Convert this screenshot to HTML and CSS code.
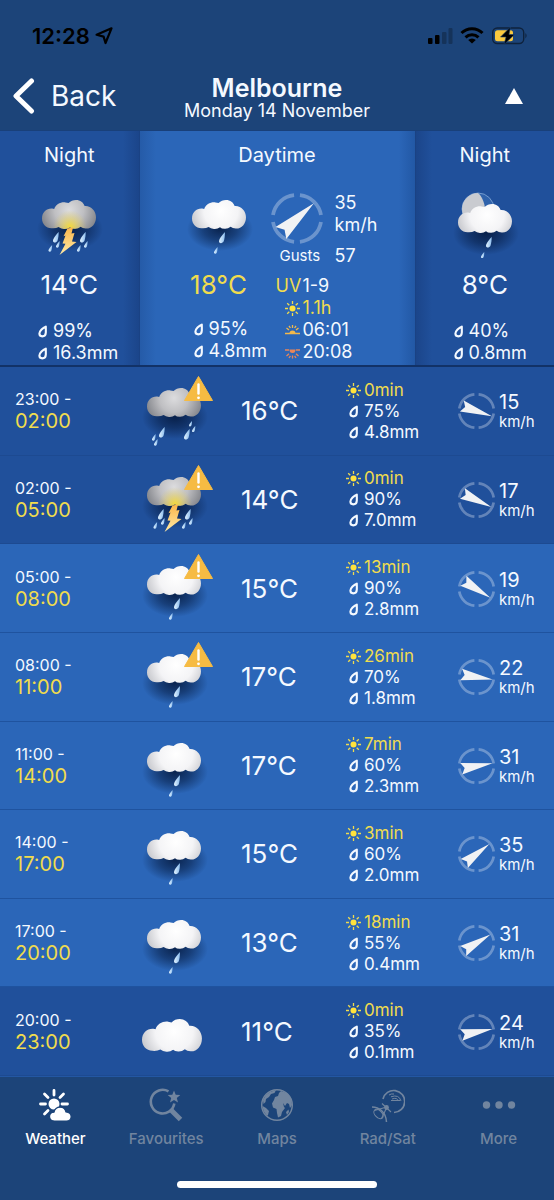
FILE: index.html
```html
<!DOCTYPE html>
<html lang="en">
<head>
<meta charset="utf-8">
<meta name="viewport" content="width=device-width, initial-scale=1">
<title>Melbourne – Monday 14 November</title>
<link rel="stylesheet" href="styles.css">
</head>
<body>
<svg class="defs" aria-hidden="true">
  <defs>
    <radialGradient id="g-white" gradientUnits="userSpaceOnUse" cx="29" cy="11" r="31">
      <stop offset="0" stop-color="#fff"/><stop offset=".55" stop-color="#f4f4f6"/><stop offset="1" stop-color="#c6c7cc"/>
    </radialGradient>
    <radialGradient id="g-grey" gradientUnits="userSpaceOnUse" cx="27" cy="10" r="29">
      <stop offset="0" stop-color="#dcdcde"/><stop offset=".5" stop-color="#bfbfc2"/><stop offset="1" stop-color="#84868c"/>
    </radialGradient>
    <radialGradient id="g-glow" gradientUnits="userSpaceOnUse" cx="28" cy="27" r="17">
      <stop offset="0" stop-color="#ffe022" stop-opacity=".85"/><stop offset="1" stop-color="#e8d060" stop-opacity="0"/>
    </radialGradient>
    <radialGradient id="g-shadow">
      <stop offset="0" stop-color="#04183c" stop-opacity=".85"/><stop offset=".5" stop-color="#04183c" stop-opacity=".5"/><stop offset="1" stop-color="#04183c" stop-opacity="0"/>
    </radialGradient>
    <linearGradient id="g-drop" x1="0" y1="0" x2="1" y2="0">
      <stop offset="0" stop-color="#e2f3ff"/><stop offset="1" stop-color="#8cbdee"/>
    </linearGradient>
    <linearGradient id="g-bolt" x1="0" y1="0" x2="0" y2="1">
      <stop offset="0" stop-color="#f9b54a"/><stop offset="1" stop-color="#ffeaa6"/>
    </linearGradient>
    <path id="cloud-shape" d="M9.5 28.2C3.6 28 0 23.6 0 18.4C0 12.6 4.2 8.6 9.5 8.6Q11 8.4 12.2 9C13.6 4.6 18.6 1.8 23.5 2.4L26.6 3C28.6 1 31.2 0 34 0C38.2 0 41.6 2.6 42.6 6C49 5.4 54 11 54 17.2C54 23.8 49.6 28.6 44.4 28.6Q40.8 28.8 38.6 26.8Q36 29 32.6 28.8Q29.6 28.8 28 27.2Q25.4 29.2 22 28.9Q18.6 28.8 16.6 27Q13.6 28.6 9.5 28.2Z"/>
    <path id="raindrop" fill="url(#g-drop)" d="M6 0C4 2 0 7 0 9.2C0 11.8 3.6 11.8 4.8 9C5.7 6.5 5.9 3 6 0Z"/>
    <ellipse id="shade" cx="28" cy="29" rx="33" ry="22" fill="url(#g-shadow)"/>
    <g id="alert">
      <path fill="#f6bb43" d="M51.5 2.5L65.500 26.500H37.5Z" stroke="#f6bb43" stroke-linejoin="round"/>
      <path d="M51.5 10.5V19.5" stroke="#fff" stroke-width="2.4" stroke-linecap="round"/><circle cx="51.5" cy="23.8" r="1.4" fill="#fff"/>
    </g>
    <g id="light-rain">
      <use href="#shade"/><use href="#cloud-shape" fill="url(#g-white)"/>
      <use href="#raindrop" transform="translate(27 32)"/><use href="#raindrop" transform="translate(22 47) scale(.6)"/>
    </g>
    <g id="heavy-rain">
      <use href="#shade"/><use href="#cloud-shape" fill="url(#g-grey)"/>
      <use href="#raindrop" transform="translate(12 39) scale(.95)"/><use href="#raindrop" transform="translate(5 46) scale(.6)"/><use href="#raindrop" transform="translate(7 51) scale(.6)"/>
      <use href="#raindrop" transform="translate(37 41) scale(.95)"/><use href="#raindrop" transform="translate(42 33) scale(.5)"/><use href="#raindrop" transform="translate(45 38) scale(.55)"/>
    </g>
    <g id="storm">
      <use href="#shade"/><use href="#cloud-shape" fill="url(#g-grey)"/><use href="#cloud-shape" fill="url(#g-glow)"/>
      <use href="#raindrop" transform="translate(11 32) scale(.95)"/><use href="#raindrop" transform="translate(6.500 45) scale(.6)"/><use href="#raindrop" transform="translate(14 41) scale(.6)"/>
      <use href="#raindrop" transform="translate(38 32) scale(.95)"/><use href="#raindrop" transform="translate(35 45) scale(.6)"/><use href="#raindrop" transform="translate(42 41) scale(.6)"/>
      <path fill="url(#g-bolt)" d="M25.500 28.500L31 27.500L29.500 33.500L32.500 33L30 41.500L34.500 42L17.500 55L23.500 43.800L20.500 43.600L23.500 35.500L21.500 36.200Z"/>
    </g>
    <g id="moon-rain" transform="translate(0 4)">
      <use href="#shade"/>
      <circle cx="20" cy="5" r="16" fill="#2f62ab" stroke="#86abd8" stroke-width=".8"/>
      <path fill="#c9cbd0" d="M20 -11A16 16 0 0 0 20 21L28 17C28 4 26 -6 20 -11Z"/>
      <use href="#cloud-shape" fill="url(#g-white)"/>
      <use href="#raindrop" transform="translate(28 33) scale(.95)"/><use href="#raindrop" transform="translate(23 48) scale(.55)"/>
    </g>
    <g id="compass">
      <path fill="none" stroke="#fff" stroke-opacity=".3" stroke-width="2.7" d="M20.600 2.300A17 17 0 0 1 35.700 16.500M35.700 21.500A17 17 0 0 1 20.600 35.700M16.400 35.700A17 17 0 0 1 1.300 21.500M1.300 16.500A17 17 0 0 1 16.400 2.300"/>
    </g>
    <path id="needle" fill="#f1f2f4" d="M34.800 19L3 24.800L6.500 19L3 13.200Z"/>
  </defs>
  <symbol id="sun" viewBox="0 0 15 15">
    <circle cx="7.500" cy="7.500" r="3" fill="#ffe23c"/>
    <path stroke="#f0dc4e" stroke-width="1.300" d="M7.500 0V3M7.500 12V15M0 7.500H3M12 7.500H15M2.200 2.200L4.300 4.300M10.700 10.700L12.800 12.800M12.800 2.200L10.700 4.300M4.300 10.700L2.200 12.800"/>
  </symbol>
  <symbol id="drop" viewBox="0 0 15 15">
    <path fill="none" stroke="#f4f9ff" stroke-width="2.100" stroke-linejoin="round" d="M10.800 2.600C8 3.800 4.400 7 4.400 9.600C4.400 11.300 5.600 12.400 7.300 12.400C9.400 12.400 10.700 11.300 10.800 8.800C10.900 6.600 10.800 4.800 10.800 2.600Z"/>
  </symbol>
  <symbol id="sunrise" viewBox="0 0 15 15">
    <path stroke="#f2b84b" stroke-width="1.300" d="M0 10.500H15M7.500 2V5M1.500 5L4 7M13.500 5L11 7M4 2.800L5.400 5M11 2.800L9.600 5"/><path fill="#f2b84b" d="M4.500 10.500A3 3 0 0 1 10.500 10.500Z"/>
  </symbol>
  <symbol id="sunset" viewBox="0 0 15 15">
    <path stroke="#e8865a" stroke-width="1.300" d="M0 5H4M11 5H15M7.500 10.500V13.500M1.500 11L4 8.800M13.500 11L11 8.800M4 13L5.400 10.800M11 13L9.600 10.800"/><path fill="#e8865a" d="M4.500 4.500H10.500A3 3.500 0 0 1 4.500 4.500Z"/>
  </symbol>
</svg>

<div class="app">
  <header class="top">
    <div class="status">
      <span class="clock">12:28</span>
      <svg class="locate" viewBox="0 0 18 18" aria-hidden="true"><path d="M16.500 1.300L10.500 16L8.600 9.600L1.600 7.800Z" fill="none" stroke="#000" stroke-width="2.200" stroke-linejoin="round"/></svg>
      <svg class="signals" viewBox="0 0 100 18" aria-hidden="true">
        <rect x="0" y="11" width="4.500" height="6" rx="1"/><rect x="7" y="8" width="4.500" height="9" rx="1"/>
        <rect x="14" y="5" width="4.500" height="12" rx="1" opacity=".25"/><rect x="20.500" y="1" width="4" height="16" rx="1" opacity=".25"/>
        <g fill="none" stroke="#000" stroke-width="3"><path d="M33.500 6A15 15 0 0 1 54.500 6"/><path d="M37.500 10.300A9.500 9.500 0 0 1 50.500 10.300"/></g>
        <path d="M44 16.500L40.200 13A5.500 5.500 0 0 1 47.800 13Z"/>
        <rect x="64.700" y="1" width="31" height="15.500" rx="4.500" fill="none" stroke="#000" stroke-opacity=".5" stroke-width="1.400"/>
        <path d="M97.500 6V11.500Q99.500 8.700 97.500 6Z" opacity=".6"/>
        <rect x="67" y="3.300" width="18" height="11" rx="2.500" fill="#fbc93d"/>
        <path d="M82.500 0L72.500 10H78L76 17.500L86.500 7.500H81Z" stroke="#1c4479" stroke-width=".6"/>
      </svg>
    </div>
    <div class="nav">
      <button class="back" type="button"><svg class="chevron" viewBox="0 0 22 36" aria-hidden="true"><path d="M18.500 3L3 18L18.500 33" fill="none" stroke="#fff" stroke-width="5" stroke-linecap="round" stroke-linejoin="round"/></svg>Back</button>
      <div class="heading"><h1>Melbourne</h1><p>Monday 14 November</p></div>
      <button class="collapse" type="button" aria-label="Collapse"><svg class="triangle" viewBox="0 0 18 16" aria-hidden="true"><path d="M9 0L18 16H0Z" fill="#fff"/></svg></button>
    </div>
  </header>

  <main class="main">
    <section class="summary">
      <article class="period night">
        <h2>Night</h2>
        <svg class="sky" viewBox="-6 -15 66 76" role="img" aria-label="Thunderstorm"><use href="#storm"/></svg>
        <p class="temp">14°C</p>
        <ul class="facts"><li><svg class="mini"><use href="#drop"/></svg>99%</li><li><svg class="mini"><use href="#drop"/></svg>16.3mm</li></ul>
      </article>
      <article class="period day">
        <h2>Daytime</h2>
        <div class="day-body">
          <div class="day-left">
            <svg class="sky" viewBox="-6 -15 66 76" role="img" aria-label="Light rain"><use href="#light-rain"/></svg>
            <p class="temp high">18°C</p>
            <ul class="facts"><li><svg class="mini"><use href="#drop"/></svg>95%</li><li><svg class="mini"><use href="#drop"/></svg>4.8mm</li></ul>
          </div>
          <div class="day-right">
            <div class="wind-now">
              <svg class="dial big" viewBox="0 0 37 38" aria-hidden="true"><use href="#compass"/><use href="#needle" transform="rotate(-42 18.500 19)"/></svg>
              <p>35<br>km/h</p>
              <span class="gusts">Gusts</span><span>57</span>
            </div>
            <ul class="facts sunfacts">
              <li><span class="uv">UV</span>1-9</li>
              <li class="sunny"><svg class="mini"><use href="#sun"/></svg>1.1h</li>
              <li><svg class="mini"><use href="#sunrise"/></svg>06:01</li>
              <li><svg class="mini"><use href="#sunset"/></svg>20:08</li>
            </ul>
          </div>
        </div>
      </article>
      <article class="period night">
        <h2>Night</h2>
        <svg class="sky" viewBox="-6 -15 66 76" role="img" aria-label="Showers, moon"><use href="#moon-rain"/></svg>
        <p class="temp">8°C</p>
        <ul class="facts"><li><svg class="mini"><use href="#drop"/></svg>40%</li><li><svg class="mini"><use href="#drop"/></svg>0.8mm</li></ul>
      </article>
    </section>

    <ul class="hours">
      <li class="hour dark">
        <p class="time"><span>23:00 -</span><b>02:00</b></p>
        <svg class="sky" viewBox="-6 -15 66 76" role="img" aria-label="Heavy rain, warning"><use href="#heavy-rain"/><use href="#alert" transform="translate(0 -14)"/></svg>
        <p class="temp">16°C</p>
        <ul class="facts"><li class="sunny"><svg class="mini"><use href="#sun"/></svg>0min</li><li><svg class="mini"><use href="#drop"/></svg>75%</li><li><svg class="mini"><use href="#drop"/></svg>4.8mm</li></ul>
        <div class="wind"><svg class="dial" viewBox="0 0 37 38" aria-hidden="true"><use href="#compass"/><use href="#needle" transform="rotate(19 18.500 19)"/></svg><p>15<small>km/h</small></p></div>
      </li>
      <li class="hour dark">
        <p class="time"><span>02:00 -</span><b>05:00</b></p>
        <svg class="sky" viewBox="-6 -15 66 76" role="img" aria-label="Thunderstorm, warning"><use href="#storm"/><use href="#alert" transform="translate(0 -14)"/></svg>
        <p class="temp">14°C</p>
        <ul class="facts"><li class="sunny"><svg class="mini"><use href="#sun"/></svg>0min</li><li><svg class="mini"><use href="#drop"/></svg>90%</li><li><svg class="mini"><use href="#drop"/></svg>7.0mm</li></ul>
        <div class="wind"><svg class="dial" viewBox="0 0 37 38" aria-hidden="true"><use href="#compass"/><use href="#needle" transform="rotate(25 18.500 19)"/></svg><p>17<small>km/h</small></p></div>
      </li>
      <li class="hour">
        <p class="time"><span>05:00 -</span><b>08:00</b></p>
        <svg class="sky" viewBox="-6 -15 66 76" role="img" aria-label="Light rain, warning"><use href="#light-rain"/><use href="#alert" transform="translate(0 -14)"/></svg>
        <p class="temp">15°C</p>
        <ul class="facts"><li class="sunny"><svg class="mini"><use href="#sun"/></svg>13min</li><li><svg class="mini"><use href="#drop"/></svg>90%</li><li><svg class="mini"><use href="#drop"/></svg>2.8mm</li></ul>
        <div class="wind"><svg class="dial" viewBox="0 0 37 38" aria-hidden="true"><use href="#compass"/><use href="#needle" transform="rotate(32 18.500 19)"/></svg><p>19<small>km/h</small></p></div>
      </li>
      <li class="hour">
        <p class="time"><span>08:00 -</span><b>11:00</b></p>
        <svg class="sky" viewBox="-6 -15 66 76" role="img" aria-label="Light rain, warning"><use href="#light-rain"/><use href="#alert" transform="translate(0 -14)"/></svg>
        <p class="temp">17°C</p>
        <ul class="facts"><li class="sunny"><svg class="mini"><use href="#sun"/></svg>26min</li><li><svg class="mini"><use href="#drop"/></svg>70%</li><li><svg class="mini"><use href="#drop"/></svg>1.8mm</li></ul>
        <div class="wind"><svg class="dial" viewBox="0 0 37 38" aria-hidden="true"><use href="#compass"/><use href="#needle" transform="rotate(9 18.500 19)"/></svg><p>22<small>km/h</small></p></div>
      </li>
      <li class="hour">
        <p class="time"><span>11:00 -</span><b>14:00</b></p>
        <svg class="sky" viewBox="-6 -15 66 76" role="img" aria-label="Light rain"><use href="#light-rain"/></svg>
        <p class="temp">17°C</p>
        <ul class="facts"><li class="sunny"><svg class="mini"><use href="#sun"/></svg>7min</li><li><svg class="mini"><use href="#drop"/></svg>60%</li><li><svg class="mini"><use href="#drop"/></svg>2.3mm</li></ul>
        <div class="wind"><svg class="dial" viewBox="0 0 37 38" aria-hidden="true"><use href="#compass"/><use href="#needle" transform="rotate(-10 18.500 19)"/></svg><p>31<small>km/h</small></p></div>
      </li>
      <li class="hour">
        <p class="time"><span>14:00 -</span><b>17:00</b></p>
        <svg class="sky" viewBox="-6 -15 66 76" role="img" aria-label="Light rain"><use href="#light-rain"/></svg>
        <p class="temp">15°C</p>
        <ul class="facts"><li class="sunny"><svg class="mini"><use href="#sun"/></svg>3min</li><li><svg class="mini"><use href="#drop"/></svg>60%</li><li><svg class="mini"><use href="#drop"/></svg>2.0mm</li></ul>
        <div class="wind"><svg class="dial" viewBox="0 0 37 38" aria-hidden="true"><use href="#compass"/><use href="#needle" transform="rotate(-38 18.500 19)"/></svg><p>35<small>km/h</small></p></div>
      </li>
      <li class="hour">
        <p class="time"><span>17:00 -</span><b>20:00</b></p>
        <svg class="sky" viewBox="-6 -15 66 76" role="img" aria-label="Light rain"><use href="#light-rain"/></svg>
        <p class="temp">13°C</p>
        <ul class="facts"><li class="sunny"><svg class="mini"><use href="#sun"/></svg>18min</li><li><svg class="mini"><use href="#drop"/></svg>55%</li><li><svg class="mini"><use href="#drop"/></svg>0.4mm</li></ul>
        <div class="wind"><svg class="dial" viewBox="0 0 37 38" aria-hidden="true"><use href="#compass"/><use href="#needle" transform="rotate(-31 18.500 19)"/></svg><p>31<small>km/h</small></p></div>
      </li>
      <li class="hour dark">
        <p class="time"><span>20:00 -</span><b>23:00</b></p>
        <svg class="sky" viewBox="-6 -15 66 76" role="img" aria-label="Cloudy"><use href="#cloud-shape" fill="url(#g-white)" transform="translate(-5 10) scale(1.110 1.130)"/></svg>
        <p class="temp">11°C</p>
        <ul class="facts"><li class="sunny"><svg class="mini"><use href="#sun"/></svg>0min</li><li><svg class="mini"><use href="#drop"/></svg>35%</li><li><svg class="mini"><use href="#drop"/></svg>0.1mm</li></ul>
        <div class="wind"><svg class="dial" viewBox="0 0 37 38" aria-hidden="true"><use href="#compass"/><use href="#needle" transform="rotate(-11 18.500 19)"/></svg><p>24<small>km/h</small></p></div>
      </li>
    </ul>
  </main>

  <footer class="bottom">
    <nav class="tabs">
      <a class="tab active" href="#weather">
        <svg class="tab-icon" viewBox="0 0 34 34" aria-hidden="true"><g fill="none" stroke="#fff" stroke-width="2.800" stroke-linecap="round"><path d="M16 2.500V7M2.500 16H7.500M24 16H29.500M6.500 6L10 9.500M25.500 6L22 9.500M6.500 26L10 22.500"/></g><circle cx="16" cy="16" r="5.500" fill="#fff"/><path d="M16.500 33C10 33 10 24.500 16 24.200C17.500 17.500 26.500 17.500 28 24C35 24.500 34.500 33 28.500 33Z" fill="#fff" stroke="#1c4479" stroke-width="1.200"/></svg>
        Weather</a>
      <a class="tab" href="#favourites">
        <svg class="tab-icon" viewBox="0 0 34 34" aria-hidden="true"><path d="M19.500 3.400A11.800 11.800 0 1 0 25.300 15.500" fill="none" stroke="currentColor" stroke-width="2.600"/><path d="M21.500 21.500L31.500 31.500" stroke="currentColor" stroke-width="5"/><path d="M25 2.500L26.700 6.800L31.300 7.100L27.800 10L29 14.500L25 12L21 14.500L22.200 10L18.700 7.100L23.300 6.800Z" fill="currentColor"/></svg>
        Favourites</a>
      <a class="tab" href="#maps">
        <svg class="tab-icon" viewBox="0 0 34 34" aria-hidden="true"><circle cx="17" cy="17" r="15.300" fill="none" stroke="currentColor" stroke-width="1.500"/><path fill="currentColor" d="M3 12L6 7L10 4L16 2L14.500 5L11 6L9 9L6 11L5.500 14L3.500 16ZM2.500 18L6 20L9 23L8 27L7 28L3.500 23ZM14 12L15 9L18 8L19 5L21 3L27 5L31 10L32 17L30 20L29 16L27 15L25 18L23 15L24 19L25 20L22 24L21 28L18 29.500L17 25L16.500 21L13 19.500L12 15.500ZM26 24L28.500 21.500L29 24L27 27Z"/></svg>
        Maps</a>
      <a class="tab" href="#radsat">
        <svg class="tab-icon" viewBox="0 0 34 34" aria-hidden="true"><g fill="none" stroke="currentColor"><path d="M12 11A11 11 0 1 1 23 24.500" stroke-width="1.700"/><path d="M20 12.500H29M21 11Q26 9 27.500 13M20 8.800Q28 6 30 13M18 7Q20 5.500 23 6" stroke-width="1"/><path d="M1 19C8 19 15 24 15.500 34" stroke-width="1.500"/><ellipse cx="7.500" cy="26" rx="5.500" ry="3.500" transform="rotate(45 7.500 26)" stroke-width="1.100"/><path d="M3.500 22.500L14 19.500M10.500 30.500L15.500 20M11 15.500L20 24" stroke-width="1.100"/></g><circle cx="15.500" cy="19.500" r="2.400" fill="currentColor"/></svg>
        Rad/Sat</a>
      <a class="tab" href="#more">
        <svg class="tab-icon" viewBox="0 0 34 34" aria-hidden="true"><g fill="currentColor"><circle cx="4.500" cy="17" r="3.700"/><circle cx="17" cy="17" r="3.700"/><circle cx="29.500" cy="17" r="3.700"/></g></svg>
        More</a>
    </nav>
    <div class="home"></div>
  </footer>
</div>
</body>
</html>
```

FILE: styles.css
```css
* { box-sizing: border-box; margin: 0; padding: 0; }

body {
  background: #1c4479;
  color: #f4f9ff;
  font-family: Inter, "Liberation Sans", sans-serif;
  font-size: 18px;
  line-height: 22px;
}

ul { list-style: none; }
svg { display: block; flex: none; }
button { border: 0; background: none; color: inherit; font: inherit; }
.defs { position: absolute; width: 0; height: 0; }

.app { min-height: 100vh; display: flex; flex-direction: column; }

/* Header */
.top { padding-bottom: 9px; background: #1c4479; }
.status { display: flex; align-items: center; height: 71px; padding: 0 26px 0 32px; color: #000; }
.clock { font-size: 22px; font-weight: 600; }
.locate { width: 18px; height: 18px; margin-left: 5px; }
.signals { width: 100px; height: 18px; margin-left: auto; }
.nav { display: grid; grid-template-columns: 1fr auto 1fr; align-items: center; height: 50px; padding: 0 13px; }
.back { display: flex; align-items: center; gap: 16px; justify-self: start; font-size: 28px; line-height: 36px; }
.chevron { width: 22px; height: 36px; }
.heading { padding-top: 4px; text-align: center; }
.heading h1 { font-size: 25px; font-weight: 600; line-height: 26px; }
.heading p { font-size: 18px; line-height: 20px; }
.collapse { justify-self: end; padding: 0 18px; }
.triangle { width: 18px; height: 16px; }

/* Day summary */
.main { flex: 1; display: flex; flex-direction: column; }
.summary { display: grid; grid-template-columns: 1fr 2fr 1fr; border-top: 1px solid #19407a; border-bottom: 2px solid #123267; }
.period { padding: 10px 0 1px; }
.night { background: #20509b; }
.night:first-child { background: linear-gradient(to left, #1b458a, #20509b 16px); }
.night:last-child { background: linear-gradient(to right, #1b458a, #20509b 16px); }
.day {
  background: linear-gradient(to right, #255ba8, #2b66b8 16px, #2b66b8 calc(100% - 16px), #2258a5);
  border-left: 1px solid #1a4284;
  border-right: 1px solid #1a4284;
}
.period h2 { font-size: 20px; font-weight: 400; line-height: 28px; text-align: center; }
.sky { width: 66px; height: 76px; overflow: visible; }
.period .sky { margin: 16px auto 0; }
.temp { font-size: 26px; line-height: 30px; }
.period .temp { margin-top: 9px; text-align: center; }
.high, .sunny, .uv, .time b { color: #f0dc4e; }
.facts li { display: flex; align-items: center; gap: 3px; }
.mini { width: 15px; height: 15px; }
.night .facts { margin: 20px 0 0 35px; }

.day-body { display: flex; gap: 11px; padding-left: 38px; }
.day-left { width: 82px; }
.day-left .facts { margin: 18px 0 0 13px; }
.wind-now { display: grid; grid-template-columns: 52px auto; column-gap: 12px; align-items: center; margin-top: 23px; }
.wind-now p { align-self: start; }
.gusts { padding-left: 9px; font-size: 15px; }
.sunfacts { margin: 8px 0 0 14px; }
.uv { width: 24px; margin-left: -9px; }

/* Three-hour rows */
.hours { flex: 1; display: grid; grid-auto-rows: 1fr; }
.hour {
  display: grid;
  grid-template-columns: 126fr 100fr 105fr 112fr 96fr;
  align-items: center;
  min-height: 82px;
  padding: 1px 0 0 15px;
  background: #2b66b8;
  border-bottom: 1px solid #1f539f;
}
.dark { background: #20509b; border-bottom-color: #1d4a91; }
.time span, .time b { display: block; font-weight: 400; }
.time span { font-size: 16px; line-height: 20px; }
.time b { font-size: 20px; line-height: 24px; }
.hour .facts { margin: 0; font-size: 17px; line-height: 21px; }
.wind { display: flex; align-items: center; gap: 4px; }
.wind p { font-size: 20px; line-height: 21px; }
.wind small { display: block; font-size: 15px; line-height: 17px; }
.dial { width: 37px; height: 38px; overflow: visible; }
.big { width: 52px; height: 53px; }

/* Tab bar */
.bottom { padding: 11px 0 12px; background: #1c4479; border-top: 1px solid #2357a3; }
.tabs { display: grid; grid-template-columns: repeat(5, 1fr); }
.tab { display: flex; flex-direction: column; align-items: center; gap: 7px; color: #71859f; font-size: 15px; font-weight: 500; line-height: 20px; text-decoration: none; }
.tab.active { color: #fff; }
.tab-icon { width: 34px; height: 34px; }
.home { width: 36%; height: 7px; margin: 32px auto 0; border-radius: 4px; background: #fff; }
```
